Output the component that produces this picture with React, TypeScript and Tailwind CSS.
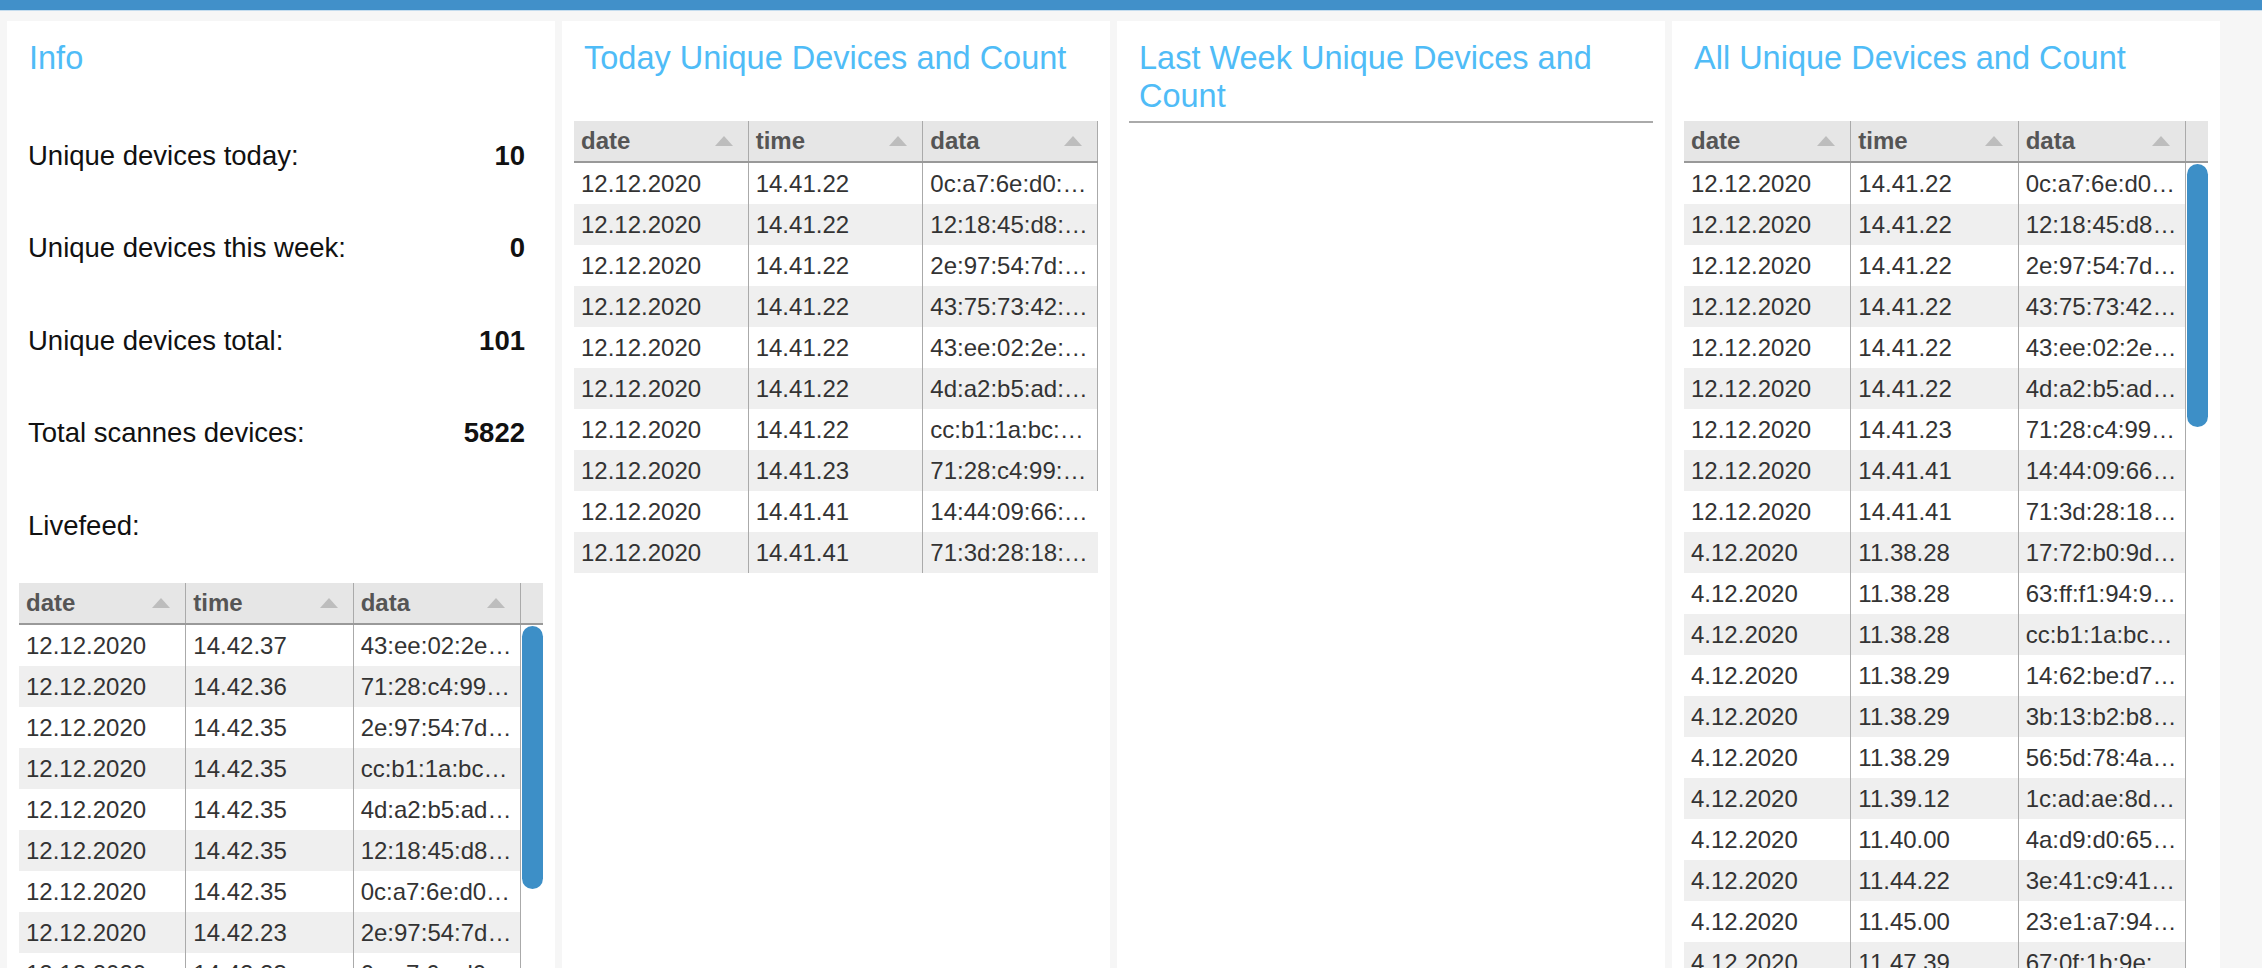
import clsx from 'clsx'
import type { ReactNode } from 'react'

type Row = [string, string, string]

const liveRows: Row[] = [
  ['12.12.2020', '14.42.37', '43:ee:02:2e:5f:91'],
  ['12.12.2020', '14.42.36', '71:28:c4:99:0a:3b'],
  ['12.12.2020', '14.42.35', '2e:97:54:7d:c2:18'],
  ['12.12.2020', '14.42.35', 'cc:b1:1a:bc:44:e7'],
  ['12.12.2020', '14.42.35', '4d:a2:b5:ad:19:6f'],
  ['12.12.2020', '14.42.35', '12:18:45:d8:7e:02'],
  ['12.12.2020', '14.42.35', '0c:a7:6e:d0:b3:5a'],
  ['12.12.2020', '14.42.23', '2e:97:54:7d:c2:18'],
  ['12.12.2020', '14.42.23', '0c:a7:6e:d0:b3:5a'],
  ['12.12.2020', '14.42.22', '43:75:73:42:8d:10'],
]

const todayRows: Row[] = [
  ['12.12.2020', '14.41.22', '0c:a7:6e:d0:b3:5a'],
  ['12.12.2020', '14.41.22', '12:18:45:d8:7e:02'],
  ['12.12.2020', '14.41.22', '2e:97:54:7d:c2:18'],
  ['12.12.2020', '14.41.22', '43:75:73:42:8d:10'],
  ['12.12.2020', '14.41.22', '43:ee:02:2e:5f:91'],
  ['12.12.2020', '14.41.22', '4d:a2:b5:ad:19:6f'],
  ['12.12.2020', '14.41.22', 'cc:b1:1a:bc:44:e7'],
  ['12.12.2020', '14.41.23', '71:28:c4:99:0a:3b'],
  ['12.12.2020', '14.41.41', '14:44:09:66:d1:2c'],
  ['12.12.2020', '14.41.41', '71:3d:28:18:a9:e4'],
]

const allRows: Row[] = [
  ['12.12.2020', '14.41.22', '0c:a7:6e:d0:b3:5a'],
  ['12.12.2020', '14.41.22', '12:18:45:d8:7e:02'],
  ['12.12.2020', '14.41.22', '2e:97:54:7d:c2:18'],
  ['12.12.2020', '14.41.22', '43:75:73:42:8d:10'],
  ['12.12.2020', '14.41.22', '43:ee:02:2e:5f:91'],
  ['12.12.2020', '14.41.22', '4d:a2:b5:ad:19:6f'],
  ['12.12.2020', '14.41.23', '71:28:c4:99:0a:3b'],
  ['12.12.2020', '14.41.41', '14:44:09:66:d1:2c'],
  ['12.12.2020', '14.41.41', '71:3d:28:18:a9:e4'],
  ['4.12.2020', '11.38.28', '17:72:b0:9d:3e:81'],
  ['4.12.2020', '11.38.28', '63:ff:f1:94:9c:07'],
  ['4.12.2020', '11.38.28', 'cc:b1:1a:bc:44:e7'],
  ['4.12.2020', '11.38.29', '14:62:be:d7:50:ad'],
  ['4.12.2020', '11.38.29', '3b:13:b2:b8:6a:f4'],
  ['4.12.2020', '11.38.29', '56:5d:78:4a:11:c9'],
  ['4.12.2020', '11.39.12', '1c:ad:ae:8d:27:63'],
  ['4.12.2020', '11.40.00', '4a:d9:d0:65:e8:3f'],
  ['4.12.2020', '11.44.22', '3e:41:c9:41:0b:d5'],
  ['4.12.2020', '11.45.00', '23:e1:a7:94:76:18'],
  ['4.12.2020', '11.47.39', '67:0f:1b:9e:c4:52'],
  ['4.12.2020', '11.48.02', '5a:7c:21:e3:90:b6'],
]

function SortArrow() {
  return (
    <svg width="18" height="10" viewBox="0 0 18 10" className="shrink-0">
      <polygon points="0,10 9,0 18,10" fill="#bdbdbd" />
    </svg>
  )
}

function HeaderCell({ label }: { label: string }) {
  return (
    <div className="flex min-w-0 flex-1 basis-0 items-center justify-between border-r border-[#aaa] pl-[7px] pr-[15px]">
      <span className="font-bold text-[#555]">{label}</span>
      <SortArrow />
    </div>
  )
}

interface DataTableProps {
  rows: Row[]
  scroll?: boolean
  brokenEdge?: boolean
}

function DataTable({ rows, scroll = false, brokenEdge = false }: DataTableProps) {
  return (
    <div className="w-[524px] shrink-0 text-[24px] text-[#333]">
      <div className="flex h-[42px] border-b-2 border-[#999] bg-[#e6e6e6]">
        <HeaderCell label="date" />
        <HeaderCell label="time" />
        <HeaderCell label="data" />
        {scroll && <div className="w-[22px] shrink-0" />}
      </div>
      <div className="flex">
        <div className="min-w-0 flex-1">
          {rows.map((row, i) => (
            <div key={i} className={clsx('flex h-[41px]', i % 2 ? 'bg-[#efefef]' : 'bg-white')}>
              {row.map((cell, j) => {
                const last = j === row.length - 1
                const noEdge = brokenEdge && last && i >= 8
                return (
                  <div
                    key={j}
                    className={clsx(
                      'relative min-w-0 flex-1 basis-0 truncate border-r px-[7px] leading-[41px]',
                      noEdge ? 'border-transparent' : 'border-[#aaa]',
                    )}
                  >
                    {cell}
                    {noEdge && i === 9 && (
                      <span className="absolute right-[-1px] bottom-0 h-[17px] w-px bg-[#aaa]" />
                    )}
                  </div>
                )
              })}
            </div>
          ))}
        </div>
        {scroll && (
          <div className="w-[22px] shrink-0 pt-px pl-px">
            <div className="h-[263px] w-[21px] rounded-full bg-[#3d8fc7]" />
          </div>
        )}
      </div>
    </div>
  )
}

function Card({ title, titleClass = 'h-[100px]', children }: { title: string; titleClass?: string; children?: ReactNode }) {
  return (
    <div className="flex w-[548px] shrink-0 flex-col overflow-hidden bg-white">
      <div className={clsx('shrink-0 pt-[18px] pr-[22px] pl-[22px]', titleClass)}>
        <h2 className="text-[32.5px] leading-[38px] font-normal text-[#4fbcf7]">{title}</h2>
      </div>
      {children}
    </div>
  )
}

function InfoRow({ label, value }: { label: string; value?: string }) {
  return (
    <div className="flex h-[92.5px] shrink-0 items-center justify-between pr-[30px] pl-[21px] text-[27.5px] text-[#111]">
      <span>{label}</span>
      {value && <span className="font-bold">{value}</span>}
    </div>
  )
}

export default function App() {
  return (
    <div className="flex h-[968px] flex-col overflow-hidden bg-[#f6f6f6] font-['Liberation_Sans',Arial,sans-serif]">
      <div className="h-[10px] shrink-0 bg-[#4190c9]" />
      <div className="h-px shrink-0 bg-[#c4dcee]" />
      <div className="flex min-h-0 flex-1 gap-[7px] px-[7px] pt-[10px]">
        <Card title="Info" titleClass="h-[88px]">
          <InfoRow label="Unique devices today:" value="10" />
          <InfoRow label="Unique devices this week:" value="0" />
          <InfoRow label="Unique devices total:" value="101" />
          <InfoRow label="Total scannes devices:" value="5822" />
          <InfoRow label="Livefeed:" />
          <div className="mt-[11.5px] px-[12px]">
            <DataTable rows={liveRows} scroll />
          </div>
        </Card>

        <Card title="Today Unique Devices and Count">
          <div className="px-[12px]">
            <DataTable rows={todayRows} brokenEdge />
          </div>
        </Card>

        <Card title="Last Week Unique Devices and Count">
          <div className="px-[12px]">
            <div className="h-[2px] w-[524px] bg-[#aaa]" />
          </div>
        </Card>

        <Card title="All Unique Devices and Count">
          <div className="px-[12px]">
            <DataTable rows={allRows} scroll />
          </div>
        </Card>
      </div>
    </div>
  )
}
